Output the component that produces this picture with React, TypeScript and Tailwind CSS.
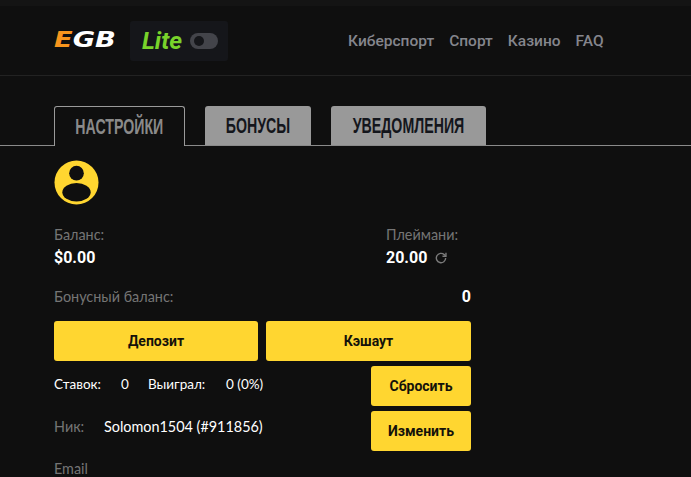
import React from 'react';

const navItems = ['Киберспорт', 'Спорт', 'Казино', 'FAQ'];

function Tabs() {
  return (
    <div className="flex h-[40px] pl-[54px] border-b border-[#8a8a8a]">
      <div className="relative z-10 flex h-[40px] w-[131px] items-center justify-center rounded-t-[3px] border border-b-0 border-[#9a9a9a] bg-[#0f0f0f]">
        <span className="scale-x-[0.645] font-['Liberation_Sans',sans-serif] text-[22px] font-bold whitespace-nowrap text-[#8a8a8a]">НАСТРОЙКИ</span>
      </div>
      <div className="ml-[20px] flex h-[39px] w-[106px] items-center justify-center rounded-t-[3px] bg-[#999999]">
        <span className="scale-x-[0.645] font-['Liberation_Sans',sans-serif] text-[22px] font-bold whitespace-nowrap text-[#14161c]">БОНУСЫ</span>
      </div>
      <div className="ml-[20px] flex h-[39px] w-[155px] items-center justify-center rounded-t-[3px] bg-[#999999]">
        <span className="scale-x-[0.645] font-['Liberation_Sans',sans-serif] text-[22px] font-bold whitespace-nowrap text-[#14161c]">УВЕДОМЛЕНИЯ</span>
      </div>
    </div>
  );
}

function YellowButton({ label, className }: { label: string; className: string }) {
  return (
    <button className={`flex h-[40px] items-center justify-center rounded-[3px] bg-[#ffd630] font-['Roboto',sans-serif] text-[14px] font-bold text-[#14120a] ${className}`}>
      {label}
    </button>
  );
}

export default function App() {
  return (
    <div className="h-[477px] w-[691px] overflow-hidden bg-[#0f0f0f] font-['Lato',sans-serif]">
      <div className="h-[6px] bg-[#141414]" />
      {/* Header */}
      <header className="flex h-[70px] items-start border-b border-[#222222] pl-[54px]">
        <span className="mt-[21px] w-[60px] font-['DejaVu_Sans',sans-serif] text-[22px] leading-[26px] font-bold whitespace-nowrap text-white italic">
          <span className="inline-block origin-left scale-x-[1.24]">
            <span className="text-[#f7941d]">E</span>GB
          </span>
        </span>
        <div className="mt-[15px] ml-[16px] flex h-[40px] w-[98px] items-center rounded-[3px] bg-[#15161a] pl-[12px]">
          <span className="font-['Roboto',sans-serif] text-[24.5px] leading-none font-bold text-[#79d32b] italic">Lite</span>
          <span className="ml-[8px] flex h-[16px] w-[28px] items-center rounded-full bg-[#43444a] pl-[4px]">
            <span className="h-[10px] w-[10px] rounded-full bg-[#15161a]" />
          </span>
        </div>
        <nav className="mt-[24px] ml-[120px] flex gap-[15px] font-['Roboto',sans-serif] text-[15.5px] leading-[22px] font-medium text-[#85868d]">
          {navItems.map(item => (
            <span key={item}>{item}</span>
          ))}
        </nav>
      </header>

      <div className="mt-[30px]">
        <Tabs />
      </div>

      {/* Profile */}
      <main className="w-[471px] pt-[14px] pl-[54px]">
        <svg width="45" height="45" viewBox="0 0 46 46" className="block">
          <circle cx="23" cy="23" r="22.5" fill="#ffd630" />
          <circle cx="23" cy="13.5" r="7.5" fill="#0f0f0f" />
          <ellipse cx="23" cy="33" rx="14.5" ry="9.5" fill="#0f0f0f" />
        </svg>

        <div className="mt-[21px] flex">
          <div className="w-[332px]">
            <div className="text-[14.4px] leading-[18px] text-[#757575]">Баланс:</div>
            <div className="mt-[4px] font-['Roboto',sans-serif] text-[16px] leading-[20px] font-bold text-white">$0.00</div>
          </div>
          <div>
            <div className="text-[14.4px] leading-[18px] text-[#757575]">Плеймани:</div>
            <div className="mt-[4px] flex items-center font-['Roboto',sans-serif] text-[16px] leading-[20px] font-bold text-white">
              20.00
              <svg width="14" height="14" viewBox="0 0 24 24" fill="none" stroke="#7a7a7a" strokeWidth="2.4" className="ml-[7px]">
                <path d="M20 12a8 8 0 1 1-2.5-5.8L20 8.5" />
                <path d="M20.5 3v6h-6" />
              </svg>
            </div>
          </div>
        </div>

        <div className="mt-[20px] flex items-center justify-between">
          <span className="text-[14.4px] leading-[18px] text-[#757575]">Бонусный баланс:</span>
          <span className="font-['Roboto',sans-serif] text-[16px] leading-[18px] font-bold text-white">0</span>
        </div>

        <div className="mt-[15px] flex gap-[8px]">
          <YellowButton label="Депозит" className="w-[204px]" />
          <YellowButton label="Кэшаут" className="w-[205px]" />
        </div>

        <div className="mt-[5px] flex justify-between">
          <div className="mt-[9px] flex text-[13.5px] leading-[18px] text-white">
            <span className="w-[67px]">Ставок:</span>
            <span className="w-[27px]">0</span>
            <span className="w-[78px]">Выиграл:</span>
            <span>0 (0%)</span>
          </div>
          <YellowButton label="Сбросить" className="w-[100px]" />
        </div>

        <div className="mt-[5px] flex justify-between">
          <div className="mt-[7px] flex text-[14.4px] leading-[18px]">
            <span className="w-[50px] text-[#757575]">Ник:</span>
            <span className="text-white">Solomon1504 (#911856)</span>
          </div>
          <YellowButton label="Изменить" className="w-[100px]" />
        </div>

        <div className="mt-[9px] text-[14.4px] leading-[18px] text-[#757575]">Email</div>
      </main>
    </div>
  );
}
